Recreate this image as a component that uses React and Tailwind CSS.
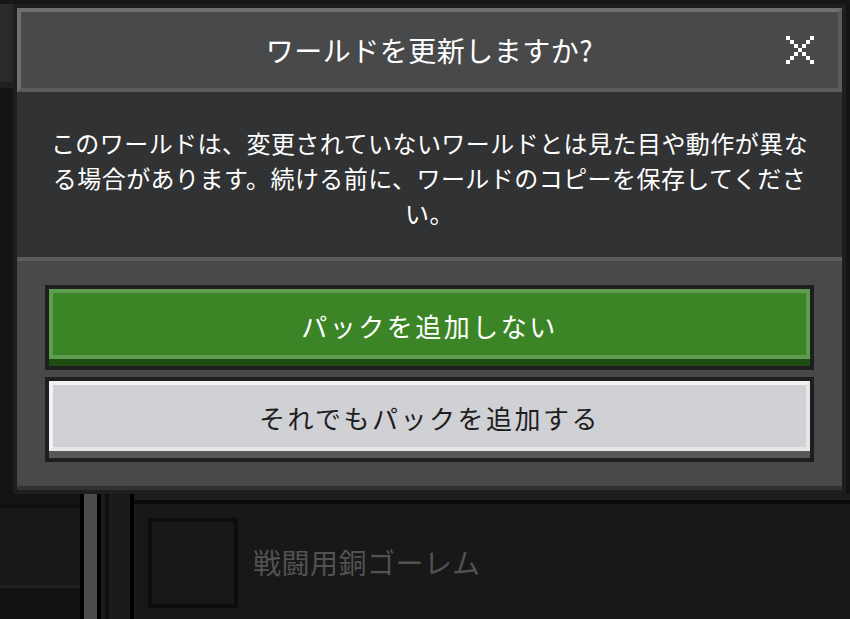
import React from 'react';

const FONT = "font-['Noto_Sans_CJK_JP','Noto_Sans',sans-serif]";

const X_CELLS = [
  [0, 0], [24, 0], [4, 4], [20, 4], [8, 8], [16, 8], [12, 12],
  [8, 16], [16, 16], [4, 20], [20, 20], [0, 24], [24, 24],
];

function PixelClose() {
  return (
    <svg width="28" height="28" viewBox="0 0 28 28" shapeRendering="crispEdges">
      {X_CELLS.map(([x, y]) => (
        <rect key={`${x}-${y}`} x={x} y={y} width="4" height="4" fill="#ffffff" />
      ))}
    </svg>
  );
}

function GreenButton({ children }) {
  return (
    <div className="border-4 border-[#1e1e1f] bg-[#1d4d13]">
      <div className="pb-[7px]">
        <div className="h-[70px] border-4 border-[#5f9d4e] bg-[#3c8527] flex items-center justify-center text-white text-[26px] tracking-[2.5px] leading-none pt-[4px]">
          {children}
        </div>
      </div>
    </div>
  );
}

function GreyButton({ children }) {
  return (
    <div className="border-4 border-[#1e1e1f] bg-[#58585a]">
      <div className="pb-[7px]">
        <div className="h-[70px] border-4 border-t-[#f2f2f3] border-l-[#f2f2f3] border-r-[#e6e6e8] border-b-[#e6e6e8] bg-[#d0d1d4] flex items-center justify-center text-[#1e1e1f] text-[26px] tracking-[2.5px] leading-none pt-[4px]">
          {children}
        </div>
      </div>
    </div>
  );
}

export default function App() {
  return (
    <div className={`relative w-[850px] h-[619px] overflow-hidden bg-[#141414] ${FONT}`}>
      {/* Screen behind the dialog */}
      <div className="flex flex-col h-full">
        <div className="h-[494px] flex flex-col">
          <div className="h-[4px] bg-[#161616]" />
          <div className="flex">
            <div className="w-[13px] h-[78px] bg-[#2a2a2b]" />
          </div>
          <div className="w-[13px] h-[6px] bg-[#202020]" />
        </div>

        <div className="flex-1 flex">
          {/* left list column */}
          <div className="w-[80px] flex flex-col">
            <div className="h-[11px] bg-[#141414]" />
            <div className="h-[3px] bg-[#101010]" />
            <div className="h-[77px] bg-[#181818]" />
            <div className="h-[3px] bg-[#1f1f1f]" />
            <div className="flex-1 bg-[#111111]" />
          </div>
          {/* scrollbar */}
          <div className="w-[4px] bg-black" />
          <div className="w-[13px] bg-[#4a4b4b]" />
          <div className="w-[4px] bg-black" />
          <div className="w-[4px] bg-[#1a1a1a]" />
          <div className="w-[4px] bg-[#0f0f0f]" />
          <div className="w-[21px] bg-[#1b1b1b]" />
          <div className="w-[4px] bg-black" />

          {/* right panel */}
          <div className="flex-1 flex flex-col">
            <div className="h-[6px] bg-[#1c1c1c]" />
            <div className="h-[4px] bg-[#0a0a0a]" />
            <div className="flex-1 flex bg-[#181818]">
              <div className="w-[3px] bg-[#1c1c1c]" />
              <div className="flex items-start gap-[15px] pl-[11px] pt-[14px]">
                <div className="w-[90px] h-[90px] border-4 border-[#0d0d0d] bg-[#181818]" />
                <span className="mt-[30px] text-[28px] leading-none text-[#525252] tracking-[0.5px]">
                  戦闘用銅ゴーレム
                </span>
              </div>
            </div>
          </div>
        </div>
      </div>

      {/* Dialog */}
      <div className="absolute left-[13px] top-[4px] w-[833px] h-[490px] border-4 border-[#1e1e1f] bg-[#48494b] flex flex-col">
        {/* header */}
        <div className="relative h-[84px] border-4 border-t-[#6f7072] border-l-[#6f7072] border-r-[#5b5c5e] border-b-[#5b5c5e] bg-[#48494b] flex items-center justify-center">
          <h1 className="text-white text-[28px] tracking-[0.5px] leading-none">ワールドを更新しますか?</h1>
          <button className="absolute right-[24px] top-[24px]">
            <PixelClose />
          </button>
        </div>

        {/* message */}
        <div className="h-[165px] bg-[#313233] px-[30px] pt-[33px]">
          <p className="text-white text-center text-[24px] leading-[35px] tracking-[0.45px]">
            このワールドは、変更されていないワールドとは見た目や動作が異なる場合があります。続ける前に、ワールドのコピーを保存してください。
          </p>
        </div>

        {/* actions */}
        <div className="flex-1 border-t-4 border-t-[#5b5c5e] border-b-4 border-b-[#313233] px-[28px] pt-[24px] flex flex-col gap-[7px]">
          <GreenButton>パックを追加しない</GreenButton>
          <GreyButton>それでもパックを追加する</GreyButton>
        </div>
      </div>
    </div>
  );
}
